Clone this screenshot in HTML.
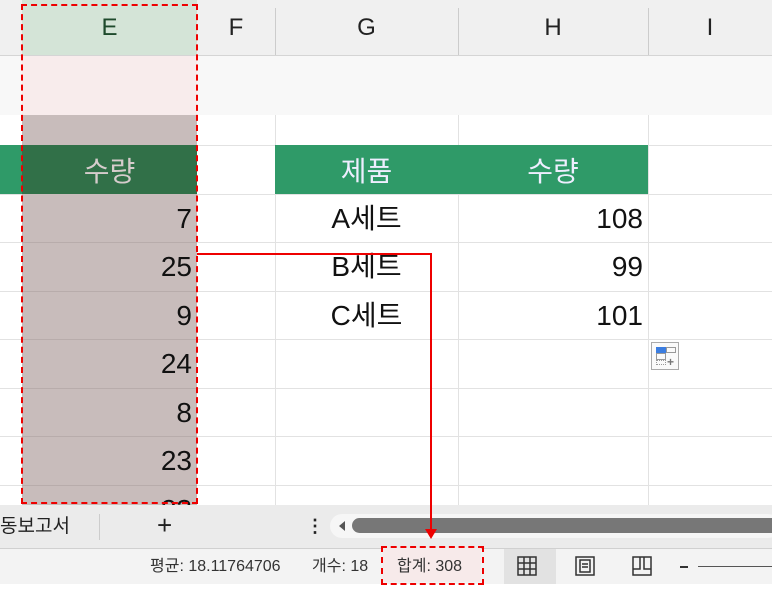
<!DOCTYPE html>
<html><head><meta charset="utf-8"><style>
body{margin:0;width:772px;height:594px;overflow:hidden;background:#fff;font-family:"Liberation Sans","Noto Sans CJK KR",sans-serif;position:relative}
.a{position:absolute}
.t{font-size:28px;color:#111;line-height:48px}
.hd{font-size:24px;color:#222;line-height:55px;text-align:center;top:0;height:55px}
</style></head><body>
<div class="a" style="left:0;top:0;width:772px;height:55px;background:#f0f0f0;border-bottom:1px solid #d5d5d5"></div>
<div class="a" style="left:22px;top:0;width:175px;height:55px;background:#d4e4d7"></div>
<div class="a hd" style="left:22px;width:175px;color:#1e4a2c">E</div>
<div class="a hd" style="left:197px;width:78px">F</div>
<div class="a hd" style="left:275px;width:183px">G</div>
<div class="a hd" style="left:458px;width:190px">H</div>
<div class="a hd" style="left:648px;width:124px">I</div>
<div class="a" style="left:275px;top:8px;width:1px;height:47px;background:#ccc"></div>
<div class="a" style="left:458px;top:8px;width:1px;height:47px;background:#ccc"></div>
<div class="a" style="left:648px;top:8px;width:1px;height:47px;background:#ccc"></div>
<div class="a" style="left:0;top:56px;width:772px;height:59px;background:#f8f8f8"></div>
<div class="a" style="left:22px;top:56px;width:175px;height:59px;background:#f8ecec"></div>
<div class="a" style="left:275px;top:115px;width:1px;height:390px;background:#e2e2e2"></div>
<div class="a" style="left:458px;top:115px;width:1px;height:390px;background:#e2e2e2"></div>
<div class="a" style="left:648px;top:115px;width:1px;height:390px;background:#e2e2e2"></div>
<div class="a" style="left:0;top:145px;width:772px;height:1px;background:#e2e2e2"></div>
<div class="a" style="left:0;top:194px;width:772px;height:1px;background:#e2e2e2"></div>
<div class="a" style="left:0;top:242px;width:772px;height:1px;background:#e2e2e2"></div>
<div class="a" style="left:0;top:291px;width:772px;height:1px;background:#e2e2e2"></div>
<div class="a" style="left:0;top:339px;width:772px;height:1px;background:#e2e2e2"></div>
<div class="a" style="left:0;top:388px;width:772px;height:1px;background:#e2e2e2"></div>
<div class="a" style="left:0;top:436px;width:772px;height:1px;background:#e2e2e2"></div>
<div class="a" style="left:0;top:485px;width:772px;height:1px;background:#e2e2e2"></div>
<div class="a" style="left:0;top:145px;width:22px;height:49px;background:#2f9a68"></div>
<div class="a" style="left:275px;top:145px;width:373px;height:49px;background:#2f9a68"></div>
<div class="a t" style="left:275px;top:148px;width:183px;text-align:center;color:#eef">제품</div>
<div class="a t" style="left:458px;top:148px;width:190px;text-align:center;color:#eef">수량</div>
<div class="a" style="left:22px;top:115px;width:175px;height:390px;background:#c8bcbb"></div>
<div class="a" style="left:22px;top:145px;width:175px;height:49px;background:#317048"></div>
<div class="a t" style="left:22px;top:148px;width:175px;text-align:center;color:#d6cccc">수량</div>
<div class="a" style="left:22px;top:242px;width:175px;height:1px;background:#b8acab"></div>
<div class="a" style="left:22px;top:291px;width:175px;height:1px;background:#b8acab"></div>
<div class="a" style="left:22px;top:339px;width:175px;height:1px;background:#b8acab"></div>
<div class="a" style="left:22px;top:388px;width:175px;height:1px;background:#b8acab"></div>
<div class="a" style="left:22px;top:436px;width:175px;height:1px;background:#b8acab"></div>
<div class="a" style="left:22px;top:485px;width:175px;height:1px;background:#b8acab"></div>
<div class="a t" style="left:22px;top:195px;width:170px;text-align:right">7</div>
<div class="a t" style="left:22px;top:243px;width:170px;text-align:right">25</div>
<div class="a t" style="left:22px;top:292px;width:170px;text-align:right">9</div>
<div class="a t" style="left:22px;top:340px;width:170px;text-align:right">24</div>
<div class="a t" style="left:22px;top:389px;width:170px;text-align:right">8</div>
<div class="a t" style="left:22px;top:437px;width:170px;text-align:right">23</div>
<div class="a t" style="left:22px;top:486px;width:170px;text-align:right">23</div>
<div class="a t" style="left:275px;top:195px;width:183px;text-align:center">A세트</div>
<div class="a t" style="left:275px;top:243px;width:183px;text-align:center">B세트</div>
<div class="a t" style="left:275px;top:292px;width:183px;text-align:center">C세트</div>
<div class="a t" style="left:458px;top:195px;width:185px;text-align:right">108</div>
<div class="a t" style="left:458px;top:243px;width:185px;text-align:right">99</div>
<div class="a t" style="left:458px;top:292px;width:185px;text-align:right">101</div>
<div class="a" style="left:651px;top:342px;width:28px;height:28px;border:1px solid #aaa;background:#fafafa;box-sizing:border-box">
<div class="a" style="left:4px;top:4px;width:10px;height:6px;background:#3b7de0"></div>
<div class="a" style="left:14px;top:4px;width:8px;height:4px;border:1px solid #999"></div>
<div class="a" style="left:4px;top:10px;width:8px;height:5px;border:1px solid #999"></div>
<div class="a" style="left:4px;top:17px;width:8px;height:3px;border:1px dotted #999"></div>
<div class="a" style="left:15px;top:13px;font-size:12px;font-weight:bold;color:#777;line-height:12px">+</div>
</div>
<div class="a" style="left:0;top:505px;width:772px;height:43px;background:#ebebeb;border-bottom:1px solid #d0d0d0"></div>
<div class="a" style="left:0;top:505px;font-size:19px;line-height:43px;color:#222">동보고서</div>
<div class="a" style="left:99px;top:514px;width:1px;height:26px;background:#ccc"></div>
<div class="a" style="left:157px;top:505px;font-size:26px;line-height:41px;color:#222">+</div>
<div class="a" style="left:306px;top:505px;font-size:18px;line-height:43px;color:#222;font-weight:bold">⋮</div>
<div class="a" style="left:330px;top:514px;width:450px;height:24px;border-radius:12px;background:#f6f6f6"></div>
<div class="a" style="left:339px;top:521px;width:0;height:0;border-top:5px solid transparent;border-bottom:5px solid transparent;border-right:6px solid #555"></div>
<div class="a" style="left:352px;top:518px;width:430px;height:15px;border-radius:8px;background:#777"></div>
<div class="a" style="left:0;top:549px;width:772px;height:35px;background:#f3f3f3"></div>
<div class="a" style="left:150px;top:549px;font-size:16px;line-height:36px;color:#333">평균: 18.11764706</div>
<div class="a" style="left:312px;top:549px;font-size:16px;line-height:36px;color:#333">개수: 18</div>
<div class="a" style="left:383px;top:548px;width:98px;height:34px;background:#f7eaea"></div>
<div class="a" style="left:397px;top:549px;font-size:16px;line-height:36px;color:#333">합계: 308</div>
<div class="a" style="left:504px;top:549px;width:52px;height:35px;background:#e2e2e2"></div>
<svg class="a" style="left:517px;top:556px" width="20" height="20"><g fill="none" stroke="#333" stroke-width="1.5"><rect x="1" y="1" width="18" height="18"/><path d="M7 1V19M13 1V19M1 7H19M1 13H19"/></g></svg>
<svg class="a" style="left:575px;top:556px" width="20" height="20"><g fill="none" stroke="#333" stroke-width="1.5"><rect x="1" y="1" width="18" height="18"/><rect x="5" y="4" width="10" height="12"/><path d="M7 8H13M7 11H13"/></g></svg>
<svg class="a" style="left:632px;top:556px" width="20" height="20"><g fill="none" stroke="#333" stroke-width="1.5"><rect x="1" y="1" width="18" height="18"/><path d="M1 13H8V1M12 1V13H19"/></g></svg>
<div class="a" style="left:680px;top:566px;width:8px;height:1.5px;background:#333"></div>
<div class="a" style="left:698px;top:566px;width:74px;height:1px;background:#555"></div>
<div class="a" style="left:21px;top:4px;width:173px;height:496px;border:2px dashed #e00"></div>
<div class="a" style="left:197px;top:253px;width:235px;height:2px;background:#e00"></div>
<div class="a" style="left:430px;top:253px;width:2px;height:278px;background:#e00"></div>
<div class="a" style="left:425px;top:529px;width:0;height:0;border-left:6px solid transparent;border-right:6px solid transparent;border-top:10px solid #e00"></div>
<div class="a" style="left:381px;top:546px;width:99px;height:35px;border:2px dashed #e00"></div>
</body></html>
